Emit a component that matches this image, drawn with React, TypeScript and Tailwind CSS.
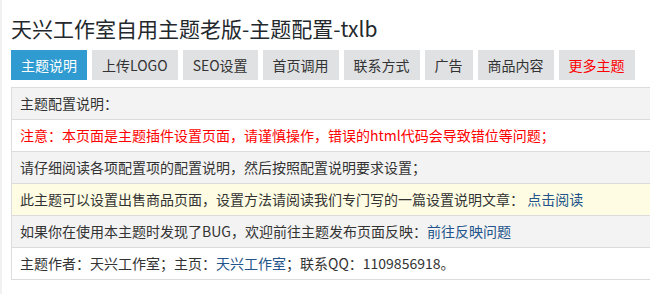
const TABS = [
  { label: "主题说明", active: true },
  { label: "上传LOGO" },
  { label: "SEO设置" },
  { label: "首页调用" },
  { label: "联系方式" },
  { label: "广告" },
  { label: "商品内容" },
  { label: "更多主题", red: true },
];

function Row({ bg, children }: { bg: string; children: React.ReactNode }) {
  return (
    <div className={`flex h-[32px] items-center border-t border-[#dcdcdc] px-[8px] ${bg}`}>
      <span className="whitespace-nowrap">{children}</span>
    </div>
  );
}

export default function App() {
  return (
    <div
      className="relative h-[294px] w-[650px] overflow-hidden bg-white text-[14px] text-[#333]"
      style={{ fontFamily: '"Microsoft YaHei", "Noto Sans CJK SC", sans-serif' }}
    >
      <div className="absolute left-0 top-0 h-full w-[2px] bg-[#f1f1f1]" />
      <div className="pl-[11px]">
        <h1 className="h-[50px] pt-[13px] text-[21px] leading-[30px] text-[#23282d]">
          天兴工作室自用主题老版-主题配置-txlb
        </h1>
        <div className="flex gap-[5px]">
          {TABS.map((t) => (
            <div
              key={t.label}
              className={`flex h-[30px] items-center px-[10px] ${
                t.active ? "bg-[#2f9bd1] text-white" : "bg-[#e0e1e3]"
              } ${t.red ? "text-[#ff0000]" : ""}`}
            >
              {t.label}
            </div>
          ))}
        </div>
        <div className="mt-[7px] w-[660px] border-x border-b border-[#dcdcdc]">
          <Row bg="bg-[#f3f3f3]">主题配置说明：</Row>
          <Row bg="bg-white">
            <span className="text-[#ff0000]">
              注意：本页面是主题插件设置页面，请谨慎操作，错误的html代码会导致错位等问题；
            </span>
          </Row>
          <Row bg="bg-[#f3f3f3]">请仔细阅读各项配置项的配置说明，然后按照配置说明要求设置；</Row>
          <Row bg="bg-[#fefde4]">
            此主题可以设置出售商品页面，设置方法请阅读我们专门写的一篇设置说明文章：{" "}
            <span className="text-[#22538a]">点击阅读</span>
          </Row>
          <Row bg="bg-[#f3f3f3]">
            如果你在使用本主题时发现了BUG，欢迎前往主题发布页面反映：
            <span className="text-[#22538a]">前往反映问题</span>
          </Row>
          <Row bg="bg-white">
            主题作者：天兴工作室；主页：<span className="text-[#22538a]">天兴工作室</span>；联系QQ：1109856918。
          </Row>
        </div>
      </div>
    </div>
  );
}
